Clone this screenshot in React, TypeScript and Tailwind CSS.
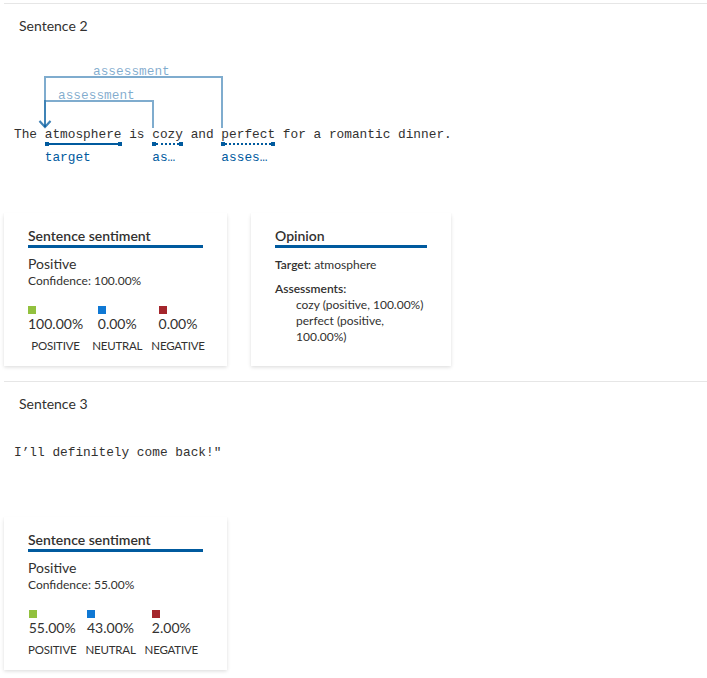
import React from "react";

const UI = "font-['Lato',sans-serif]";
const MONO = "font-['Liberation_Mono',monospace] text-[12.8px] leading-[18px]";

function Underline({ dotted }: { dotted?: boolean }) {
  return (
    <div className="flex items-center h-[4px] -mt-[2px] w-full">
      <div className="w-[4px] h-[4px] bg-[#005a9e] shrink-0" />
      {dotted ? (
        <div className="flex-1 border-t-2 border-dotted border-[#005a9e]" />
      ) : (
        <div className="flex-1 h-[2px] bg-[#005a9e]" />
      )}
      <div className="w-[4px] h-[4px] bg-[#005a9e] shrink-0" />
    </div>
  );
}

function Token({ word, label, dotted }: { word: string; label: string; dotted?: boolean }) {
  return (
    <div className="flex flex-col items-start">
      <span>{word}</span>
      <Underline dotted={dotted} />
      <span className="mt-[3px] text-[#005a9e] whitespace-pre">{label}</span>
    </div>
  );
}

function Plain({ t }: { t: string }) {
  return <span className="whitespace-pre">{t}</span>;
}

function Score({ color, value, label }: { color: string; value: string; label: string }) {
  return (
    <div className="flex flex-col items-center">
      <div className="flex flex-col items-start">
        <div className={`w-[8px] h-[8px] ${color}`} />
        <div className="mt-[1px] text-[14px] leading-[18px]">{value}</div>
      </div>
      <div className="mt-[5px] text-[11.5px] leading-[16px] tracking-[-0.2px]">{label}</div>
    </div>
  );
}

function CardTitle({ children }: { children: React.ReactNode }) {
  return (
    <div className="text-[14px] leading-[18px] font-semibold border-b-[3px] border-[#005a9e]">
      {children}
    </div>
  );
}

function SentimentCard({
  confidence,
  scores,
}: {
  confidence: string;
  scores: [string, string, string];
}) {
  return (
    <div className="w-[223px] bg-white px-[24px] pt-[14px] pb-[12px] shadow-[0_1.6px_3.6px_0_rgba(0,0,0,0.132),0_0.3px_0.9px_0_rgba(0,0,0,0.108)]">
      <CardTitle>Sentence sentiment</CardTitle>
      <div className="mt-[7px] text-[14px] leading-[18px]">Positive</div>
      <div className="text-[12px] leading-[16px]">Confidence: {confidence}</div>
      <div className="mt-[17px] flex gap-[9px]">
        <Score color="bg-[#92c13e]" value={scores[0]} label="POSITIVE" />
        <Score color="bg-[#0f78d4]" value={scores[1]} label="NEUTRAL" />
        <Score color="bg-[#a4262c]" value={scores[2]} label="NEGATIVE" />
      </div>
    </div>
  );
}

function OpinionCard() {
  return (
    <div className="w-[200px] bg-white px-[24px] pt-[14px] pb-[12px] shadow-[0_1.6px_3.6px_0_rgba(0,0,0,0.132),0_0.3px_0.9px_0_rgba(0,0,0,0.108)]">
      <CardTitle>Opinion</CardTitle>
      <div className="mt-[9px] text-[12px] leading-[16px]">
        <span className="font-semibold">Target:</span> atmosphere
      </div>
      <div className="mt-[8px] text-[12px] leading-[16px]">
        <div className="font-semibold">Assessments:</div>
        <div className="pl-[21px]">
          <div className="whitespace-nowrap">cozy (positive, 100.00%)</div>
          <div>
            perfect (positive,
            <br />
            100.00%)
          </div>
        </div>
      </div>
    </div>
  );
}

export default function App() {
  return (
    <div className={`w-[707px] min-h-[678px] bg-white text-[#323130] ${UI} pt-[3px]`}>
      {/* Sentence 2 */}
      <section className="ml-[4px] border-t border-[#e6e6e6] pb-[15px]">
        <div className="pl-[15px] pt-[12px] text-[14px] leading-[20px]">Sentence 2</div>
        <svg width="300" height="90" className="block overflow-visible" viewBox="0 0 300 90">
          <g fill="none" stroke="#005a9e" strokeOpacity="0.5" strokeWidth="2">
            <path d="M41 91 V41 H218 V92" />
            <path d="M41 91 V65 H149 V92" />
            <path d="M35.5 85 L41 91 L46.5 85" />
            <path d="M35.5 85 L41 91 L46.5 85" />
          </g>
          <g
            fill="#005a9e"
            fillOpacity="0.5"
            style={{ fontFamily: "'Liberation Mono', monospace", fontSize: "12.8px" }}
          >
            <text x="89" y="39">assessment</text>
            <text x="54" y="63">assessment</text>
          </g>
        </svg>
        <div className={`${MONO} pl-[10px] flex items-start`}>
          <Plain t="The " />
          <Token word="atmosphere" label="target" />
          <Plain t=" is " />
          <Token word="cozy" label="as…" dotted />
          <Plain t=" and " />
          <Token word="perfect" label="asses…" dotted />
          <Plain t=" for a romantic dinner." />
        </div>
        <div className="mt-[46px] flex gap-[24px] items-stretch">
          <SentimentCard confidence="100.00%" scores={["100.00%", "0.00%", "0.00%"]} />
          <OpinionCard />
        </div>
      </section>

      {/* Sentence 3 */}
      <section className="ml-[4px] border-t border-[#e6e6e6]">
        <div className="pl-[15px] pt-[12px] text-[14px] leading-[20px]">Sentence 3</div>
        <div className={`${MONO} pl-[10px] mt-[30px]`}>
          <span className="whitespace-pre">I’ll definitely come back!"</span>
        </div>
        <div className="mt-[55px] flex gap-[24px]">
          <SentimentCard confidence="55.00%" scores={["55.00%", "43.00%", "2.00%"]} />
        </div>
      </section>
    </div>
  );
}
